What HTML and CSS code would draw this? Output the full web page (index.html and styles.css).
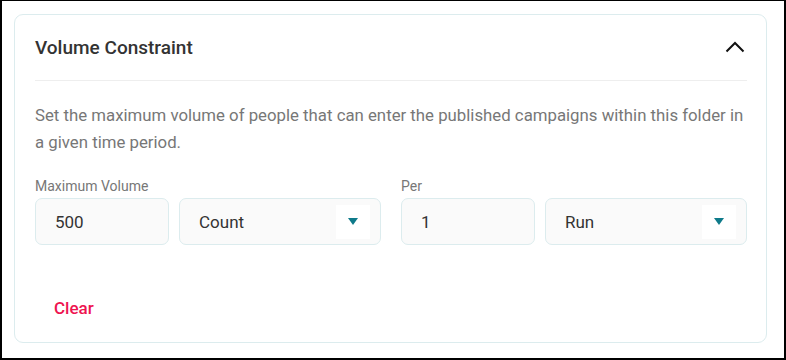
FILE: index.html
```html
<!DOCTYPE html>
<html>
<head>
<meta charset="utf-8">
<link rel="stylesheet" href="styles.css">
</head>
<body>
<section class="card">
  <header class="card-header">
    <h2 class="title">Volume Constraint</h2>
    <svg class="chevron" width="20" height="12" viewBox="0 0 20 12"><path d="M1.5 10.5 L10 2 L18.5 10.5" fill="none" stroke="#111" stroke-width="2"/></svg>
  </header>
  <p class="desc">Set the maximum volume of people that can enter the published campaigns within this folder in a given time period.</p>
  <div class="fields">
    <div class="group">
      <label class="label">Maximum Volume</label>
      <div class="row">
        <div class="input">500</div>
        <div class="select"><span>Count</span><span class="arrow-box"><span class="arrow"></span></span></div>
      </div>
    </div>
    <div class="group">
      <label class="label">Per</label>
      <div class="row">
        <div class="input">1</div>
        <div class="select"><span>Run</span><span class="arrow-box"><span class="arrow"></span></span></div>
      </div>
    </div>
  </div>
  <div class="actions"><button class="clear">Clear</button></div>
</section>
</body>
</html>
```
FILE: styles.css
```css
* { box-sizing: border-box; }
html, body { margin: 0; padding: 0; }
body {
  width: 786px;
  height: 360px;
  border: 2px solid #000;
  border-top-width: 1px;
  background: #fff;
  font-family: Roboto, "Noto Sans", sans-serif;
  padding: 13px 17px 0 12px;
}
.card {
  border: 1px solid #dcecee;
  border-radius: 9px;
  height: 329px;
  padding: 0 19px 0 20px;
  background: #fff;
}
.card-header {
  display: flex;
  align-items: center;
  justify-content: space-between;
  padding: 20px 2px 20px 0;
  border-bottom: 1px solid #eeeeee;
}
.title {
  margin: 0;
  font-size: 19px;
  line-height: 25px;
  font-weight: 500;
  color: #333;
}
.chevron { display: block; margin-top: -1px; }
.desc {
  margin: 21px 0 0;
  font-size: 16.8px;
  line-height: 27px;
  color: #777;
}
.fields {
  display: grid;
  grid-template-columns: 1fr 1fr;
  column-gap: 20px;
  margin-top: 22px;
}
.label {
  display: block;
  font-size: 14px;
  line-height: 16px;
  color: #777;
  margin-bottom: 4px;
}
.row {
  display: grid;
  grid-template-columns: 134px 1fr;
  column-gap: 10px;
}
.input, .select {
  height: 47px;
  border: 1px solid #dcecee;
  border-radius: 7px;
  background: #fafafa;
  font-size: 17px;
  color: #333;
  display: flex;
  align-items: center;
  padding-left: 19px;
}
.select {
  justify-content: space-between;
  padding-right: 10px;
}
.arrow-box {
  width: 34px;
  height: 34px;
  background: #fff;
  display: flex;
  align-items: center;
  justify-content: center;
}
.arrow {
  width: 0;
  height: 0;
  border-left: 5px solid transparent;
  border-right: 5px solid transparent;
  border-top: 7px solid #0e7a8a;
}
.actions { margin-top: 53px; }
.clear {
  border: 0;
  background: none;
  font-family: inherit;
  font-size: 17px;
  line-height: 20px;
  font-weight: 500;
  color: #ee1450;
  padding: 0 0 0 19px;
  cursor: pointer;
}
```
